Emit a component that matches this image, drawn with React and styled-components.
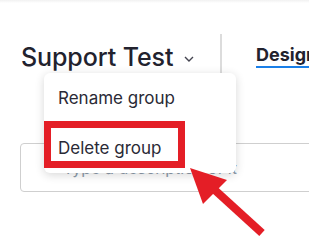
import { createGlobalStyle, styled } from "styled-components"

const Global = createGlobalStyle`
  body {
    margin: 0;
    background: #ffffff;
    font-family: Inter, "Noto Sans", sans-serif;
    overflow: hidden;
  }
`

export default function App() {
  return (
    <>
      <Global />
      <Page>
        <TopShade />
        <Header>
          <TitleArea>
            <Title>Support Test</Title>
            <Chevron viewBox="0 0 10 6">
              <path d="M1 1 L5 5 L9 1" />
            </Chevron>
          </TitleArea>
          <Divider />
          <Tab>Design</Tab>
        </Header>

        <Field>
          <Placeholder>Type a description of it</Placeholder>
        </Field>

        <Menu>
          <MenuItem>Rename group</MenuItem>
          <MenuItem>Delete group</MenuItem>
          <Highlight />
        </Menu>

        <Arrow viewBox="0 0 309 248">
          <line x1="262" y1="233" x2="206" y2="182" />
          <polygon points="190,168 203,204 227,180" />
        </Arrow>
      </Page>
    </>
  )
}

const Page = styled.div`
  position: relative;
  width: 309px;
  height: 248px;
  overflow: hidden;
`

const TopShade = styled.div`
  height: 3px;
  background: linear-gradient(#f1f1f1, #ffffff);
`

const Header = styled.div`
  display: flex;
  height: 44px;
  margin-top: 31px;
`

const TitleArea = styled.div`
  display: flex;
  flex-shrink: 0;
  align-items: flex-start;
  width: 220px;
  padding-left: 21px;
  box-sizing: border-box;
`

const Title = styled.h1`
  margin: 8px 0 0 0;
  flex-shrink: 0;
  white-space: nowrap;
  font-size: 25px;
  line-height: 30px;
  font-weight: 500;
  color: #22222e;
  letter-spacing: -0.1px;
`

const Chevron = styled.svg`
  flex-shrink: 0;
  width: 10px;
  height: 6px;
  margin: 22px 0 0 11px;
  fill: none;
  stroke: #444450;
  stroke-width: 1.4;
`

const Divider = styled.div`
  flex-shrink: 0;
  width: 2px;
  background: #dcdcdc;
`

const Tab = styled.div`
  flex-shrink: 0;
  align-self: flex-start;
  white-space: nowrap;
  margin: 10px 0 0 34px;
  padding: 0 40px 1px 0;
  font-size: 18px;
  line-height: 21px;
  font-weight: 700;
  color: #22222e;
  border-bottom: 2px solid #1a7fe8;
`

const Field = styled.div`
  display: flex;
  align-items: center;
  margin: 65px 0 0 20px;
  width: 330px;
  height: 49px;
  box-sizing: border-box;
  border: 1px solid #cfcfcf;
  border-radius: 4px;
  padding-left: 42px;
`

const Placeholder = styled.span`
  font-size: 16px;
  color: #8d9cab;
  white-space: nowrap;
`

const Menu = styled.div`
  position: absolute;
  top: 73px;
  left: 44px;
  width: 192px;
  height: 100px;
  background: #ffffff;
  border-radius: 6px;
  box-shadow: 0 2px 10px rgba(0, 0, 0, 0.16);
`

const MenuItem = styled.div`
  height: 50px;
  line-height: 50px;
  padding-left: 14px;
  font-size: 17px;
  color: #2a2a36;
`

const Highlight = styled.div`
  position: absolute;
  left: 0;
  top: 48px;
  width: 141px;
  height: 47px;
  box-sizing: border-box;
  border: 7px solid #e41e26;
`

const Arrow = styled.svg`
  position: absolute;
  inset: 0;
  width: 309px;
  height: 248px;
  line {
    stroke: #e41e26;
    stroke-width: 8;
  }
  polygon {
    fill: #e41e26;
  }
`
